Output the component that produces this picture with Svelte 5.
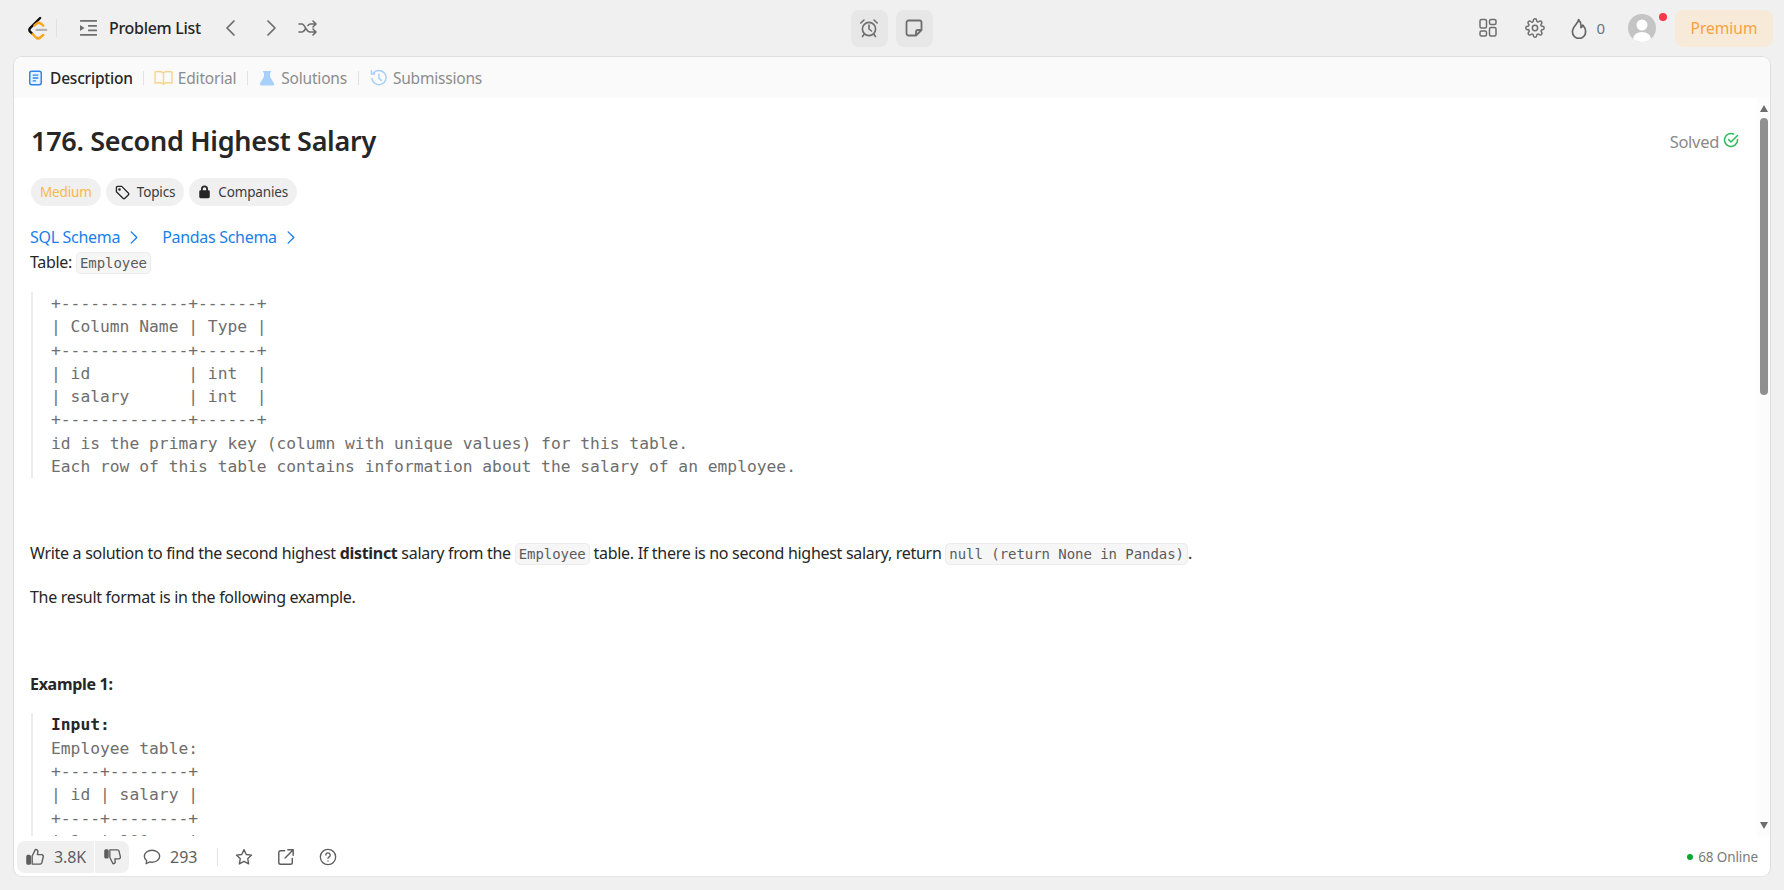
<script>
  const schema = `+-------------+------+
| Column Name | Type |
+-------------+------+
| id          | int  |
| salary      | int  |
+-------------+------+
id is the primary key (column with unique values) for this table.
Each row of this table contains information about the salary of an employee.`;
  const example = `Employee table:
+----+--------+
| id | salary |
+----+--------+
| 1  | 100    |
| 2  | 200    |`;
</script>

<div class="page">
  <header class="top">
    <div class="left">
      <svg class="logo" viewBox="0 0 24 28" width="21" height="25" fill="none" stroke-linecap="round" stroke-linejoin="round">
        <path d="M15 2 3.500 13.500a2.800 2.800 0 0 0 0 4L6 20" stroke="#111" stroke-width="2.800"/>
        <path d="M6.500 20.500 10 24a4 4 0 0 0 5.500 0l3-2.600" stroke="#f5a623" stroke-width="2.800"/>
        <path d="M8.500 10.500 11 8.500a4 4 0 0 1 5 0l2.500 2.200" stroke="#f5a623" stroke-width="2.800"/>
        <path d="M11 15.600h11" stroke="#b3b3b3" stroke-width="2.600"/>
      </svg>
      <span class="sep tall"></span>
      <svg class="ic list" viewBox="0 0 20 20" width="20" height="20" fill="#6e6e6e">
        <rect x="1" y="2" width="17" height="1.800" rx=".5"/><rect x="9" y="7" width="9" height="1.800" rx=".5"/><rect x="9" y="11.500" width="9" height="1.800" rx=".5"/><rect x="1" y="16" width="17" height="1.800" rx=".5"/><path d="M1 7v6l4.500-3z"/>
      </svg>
      <span class="plist">Problem List</span>
      <svg class="ic prev" viewBox="0 0 20 20" width="20" height="20" fill="none" stroke="#6b6b6b" stroke-width="1.700" stroke-linecap="round" stroke-linejoin="round"><path d="M13 3 6 10l7 7"/></svg>
      <svg class="ic next" viewBox="0 0 20 20" width="20" height="20" fill="none" stroke="#6b6b6b" stroke-width="1.700" stroke-linecap="round" stroke-linejoin="round"><path d="m7 3 7 7-7 7"/></svg>
      <svg class="ic shuffle" viewBox="0 0 20 20" width="20" height="20" fill="none" stroke="#6b6b6b" stroke-width="1.600" stroke-linecap="round" stroke-linejoin="round"><path d="M1 6h3c3 0 4 8 8 8h6M1 14h3c1.500 0 2.500-1.500 3.300-3M10 7.500C10.700 6.600 11.500 6 12.500 6H18M15 3l3 3-3 3M15 11l3 3-3 3"/></svg>
    </div>
    <div class="mid">
      <button class="sq" aria-label="Timer">
        <svg viewBox="0 0 20 20" width="20" height="20" fill="none" stroke="#6e6e6e" stroke-width="1.600" stroke-linecap="round" stroke-linejoin="round"><circle cx="10" cy="11" r="6.600"/><path d="M10 7v4l2.500 2M1.800 5 5 2M18.200 5 15 2M5 16.500 3.500 18.500M15 16.500l1.500 2"/></svg>
      </button>
      <button class="sq" aria-label="Notes">
        <svg viewBox="0 0 20 20" width="20" height="20" fill="none" stroke="#6e6e6e" stroke-width="1.800" stroke-linecap="round" stroke-linejoin="round"><path d="M4.500 2.500h11a2 2 0 0 1 2 2V12l-5.500 5.500H4.500a2 2 0 0 1-2-2v-11a2 2 0 0 1 2-2zM17.500 12H14a2 2 0 0 0-2 2v3.500"/></svg>
      </button>
    </div>
    <div class="right">
      <svg class="ic" viewBox="0 0 18 20" width="18" height="20" fill="none" stroke="#6e6e6e" stroke-width="1.500"><rect x="1" y="1.500" width="6.500" height="8.500" rx="1.500"/><rect x="1" y="13" width="6.500" height="5" rx="1.500"/><rect x="10.500" y="1.500" width="6.500" height="5" rx="1.500"/><rect x="10.500" y="9.500" width="6.500" height="8.500" rx="1.500"/></svg>
      <svg class="ic gear" viewBox="0 0 24 24" width="20" height="20" fill="none" stroke="#6e6e6e" stroke-width="1.800" stroke-linecap="round" stroke-linejoin="round"><circle cx="12" cy="12" r="3.200"/><path d="M19.400 15a1.650 1.650 0 0 0 .33 1.820l.06.06a2 2 0 1 1-2.830 2.830l-.06-.06a1.650 1.650 0 0 0-2.800 1.170V21a2 2 0 1 1-4 0v-.09a1.650 1.650 0 0 0-2.800-1.170l-.06.06a2 2 0 1 1-2.830-2.830l.06-.06A1.650 1.650 0 0 0 3.090 14H3a2 2 0 1 1 0-4h.09a1.650 1.650 0 0 0 1.170-2.800l-.06-.06a2 2 0 1 1 2.830-2.830l.06.06A1.650 1.650 0 0 0 10 3.090V3a2 2 0 1 1 4 0v.09a1.650 1.650 0 0 0 2.800 1.170l.06-.06a2 2 0 1 1 2.830 2.830l-.06.06A1.650 1.650 0 0 0 20.910 10H21a2 2 0 1 1 0 4h-.09a1.650 1.650 0 0 0-1.510 1z"/></svg>
      <span class="streak">
        <svg viewBox="0 0 18 22" width="17" height="21" fill="none" stroke="#666" stroke-width="1.800" stroke-linejoin="round"><path d="M8 1.500c.5 3.500-6.500 7-6.500 13a7 7 0 0 0 14 0c0-3-1.500-5.500-3-7-.2 1.500-1 2.300-2 2.500.5-3-.5-6.500-2.500-8.500z"/></svg>
        <span>0</span>
      </span>
      <span class="avatar">
        <svg viewBox="0 0 28 28" width="28" height="28"><defs><clipPath id="av"><circle cx="14" cy="14" r="14"/></clipPath></defs><g clip-path="url(#av)"><rect width="28" height="28" fill="#c4c4c4"/><circle cx="14" cy="11" r="5.500" fill="#fff"/><ellipse cx="14" cy="25" rx="9" ry="7" fill="#fff"/></g></svg>
        <i class="dot"></i>
      </span>
      <button class="premium">Premium</button>
    </div>
  </header>

  <main class="panel">
    <nav class="tabs">
      <span class="tab active">
        <svg viewBox="0 0 14 16" width="13" height="16"><rect x=".8" y=".8" width="12.400" height="14.400" rx="2" fill="#e9f2fe" stroke="#2c86ee" stroke-width="1.600"/><path d="M4 5h6M4 8h6M4 11h3.500" stroke="#2c86ee" stroke-width="1.400"/></svg>
        Description
      </span>
      <span class="sep"></span>
      <span class="tab">
        <svg class="book" viewBox="0 0 20 16" width="19" height="15" fill="none" stroke="#f7d48f" stroke-width="1.500"><path d="M10 3C8 1.500 4 1.500 1 2v12c3-.5 7-.5 9 1 2-1.500 6-1.500 9-1V2c-3-.5-7-.5-9 1zM10 3v12"/></svg>
        Editorial
      </span>
      <span class="sep"></span>
      <span class="tab">
        <svg viewBox="0 0 16 16" width="16" height="16"><path d="M4 1h8v1.500h-1v4l4 7a1.300 1.300 0 0 1-1.200 2H2.200A1.300 1.300 0 0 1 1 13.500l4-7v-4H4z" fill="#a9d0fb"/></svg>
        Solutions
      </span>
      <span class="sep"></span>
      <span class="tab">
        <svg viewBox="0 0 18 18" width="17" height="17" fill="none" stroke="#a9d0fb" stroke-width="1.600" stroke-linecap="round" stroke-linejoin="round"><path d="M3.500 4.500A7.500 7.500 0 1 1 2 10M1.500 1.800v3.400h3.400M9.500 5.500V10l2.500 2"/></svg>
        Submissions
      </span>
    </nav>

    <div class="body">
      <article class="content">
        <div class="titlerow">
          <h1>176. Second Highest Salary</h1>
          <span class="solved">Solved
            <svg viewBox="0 0 16 16" width="16" height="16" fill="none" stroke="#2cbb5d" stroke-width="1.500" stroke-linecap="round" stroke-linejoin="round"><path d="M14.500 7.500V8A6.500 6.500 0 1 1 10.600 2M5.500 7.500 8 10l6.500-6.500"/></svg>
          </span>
        </div>
        <div class="pills">
          <span class="pill medium">Medium</span>
          <span class="pill">
            <svg viewBox="0 0 16 16" width="15" height="15" fill="none" stroke="#262626" stroke-width="1.400" stroke-linejoin="round"><path d="M1.500 2.800c0-.7.600-1.300 1.300-1.300h4.400l7 7a1.500 1.500 0 0 1 0 2.100l-3.600 3.600a1.500 1.500 0 0 1-2.100 0l-7-7z"/><circle cx="4.800" cy="4.800" r=".7"/></svg>
            Topics
          </span>
          <span class="pill">
            <svg viewBox="0 0 14 16" width="13" height="14" fill="#262626"><path d="M3 6V4.500a4 4 0 0 1 8 0V6h.5A1.500 1.500 0 0 1 13 7.500v6a1.500 1.500 0 0 1-1.500 1.500h-9A1.500 1.500 0 0 1 1 13.500v-6A1.500 1.500 0 0 1 2.500 6zm2 0h4V4.500a2 2 0 0 0-4 0z"/></svg>
            Companies
          </span>
        </div>
        <div class="links">
          <a href="#s">SQL Schema <svg viewBox="0 0 10 16" width="10" height="15" fill="none" stroke="#1a7fe8" stroke-width="1.500" stroke-linecap="round" stroke-linejoin="round"><path d="m2 2 6 6-6 6"/></svg></a>
          <a href="#p">Pandas Schema <svg viewBox="0 0 10 16" width="10" height="15" fill="none" stroke="#1a7fe8" stroke-width="1.500" stroke-linecap="round" stroke-linejoin="round"><path d="m2 2 6 6-6 6"/></svg></a>
        </div>
        <p class="tbl">Table: <code>Employee</code></p>
        <pre class="first">{schema}</pre>
        <p class="intro">Write a solution to find the second highest <strong>distinct</strong> salary from the <code>Employee</code> table. If there is no second highest salary, return <code>null (return None in Pandas)</code>.</p>
        <p class="fmt">The result format is in the following example.</p>
        <p class="ex"><strong>Example 1:</strong></p>
        <pre><strong>Input:</strong>
{example}</pre>
      </article>
      <div class="scrollbar">
        <i class="up"></i>
        <i class="thumb"></i>
        <i class="grow"></i>
        <i class="down"></i>
      </div>
    </div>

    <footer class="foot">
      <div class="votes">
        <span class="like">
          <svg viewBox="0 0 20 20" width="19" height="19" fill="none" stroke="#5e5e5e" stroke-width="1.500" stroke-linejoin="round"><rect x="1" y="9" width="3.500" height="9" rx="1" fill="#5e5e5e"/><path d="M6.500 9.500 10 2.500c1.800 0 2.500 1.200 2.500 2.500L12 8h4.500c1 0 2 1 1.700 2.200l-1.500 6.300c-.2.900-1 1.500-1.900 1.500H6.500z"/></svg>
          3.8K
        </span>
        <span class="dislike">
          <svg viewBox="0 0 20 20" width="18" height="18" fill="none" stroke="#5e5e5e" stroke-width="1.500" stroke-linejoin="round"><rect x="1" y="2" width="3.500" height="9" rx="1" fill="#5e5e5e"/><path d="M6.500 10.500 10 17.500c1.800 0 2.500-1.200 2.500-2.500L12 12h4.500c1 0 2-1 1.700-2.200l-1.500-6.300C16.500 2.600 15.700 2 14.800 2H6.500z"/></svg>
        </span>
      </div>
      <span class="comments">
        <svg viewBox="0 0 20 20" width="18" height="18" fill="none" stroke="#5e5e5e" stroke-width="1.500" stroke-linejoin="round"><path d="M10 2.500c4.700 0 8.500 2.900 8.500 6.700s-3.800 6.600-8.500 6.600c-1 0-1.700-.1-2.500-.3L3.500 17.500l.6-3.400C2.500 13 1.500 11.200 1.500 9.200c0-3.800 3.800-6.700 8.500-6.700z"/></svg>
        293
      </span>
      <span class="sep fsep"></span>
      <svg class="fic" viewBox="0 0 20 20" width="18" height="18" fill="none" stroke="#5e5e5e" stroke-width="1.500" stroke-linejoin="round"><path d="m10 1.800 2.500 5.400 5.900.7-4.300 4 1.100 5.800L10 14.800l-5.200 2.900 1.100-5.800-4.300-4 5.900-.7z"/></svg>
      <svg class="fic" viewBox="0 0 20 20" width="18" height="18" fill="none" stroke="#5e5e5e" stroke-width="1.600" stroke-linecap="round" stroke-linejoin="round"><path d="M8.500 3H4a2 2 0 0 0-2 2v11a2 2 0 0 0 2 2h11a2 2 0 0 0 2-2v-4.500M12 2h6v6M18 2 9 11"/></svg>
      <svg class="fic" viewBox="0 0 20 20" width="18" height="18" fill="none" stroke="#5e5e5e" stroke-width="1.500" stroke-linecap="round" stroke-linejoin="round"><circle cx="10" cy="10" r="8.500"/><path d="M7.600 7.800a2.400 2.400 0 1 1 3.700 2c-.8.500-1.300 1-1.300 1.700M10 14.300v.1"/></svg>
      <span class="online"><i></i>68 Online</span>
    </footer>
  </main>
</div>

<style>
  :global(body) { margin: 0; background: #f0f0f0; }
  .page {
    width: 1784px; height: 890px; overflow: hidden; display: flex; flex-direction: column;
    font-family: "Noto Sans", "Open Sans", sans-serif; color: #262626; background: #f0f0f0;
  }
  svg { flex: none; display: block; }
  .top { height: 56px; display: flex; align-items: center; position: relative; padding: 0 11px; }
  .left { display: flex; align-items: center; flex: 1; }
  .logo { margin: 0 8px 0 16px; }
  .sep { width: 1px; height: 15px; background: #e2e2e2; flex: none; }
  .sep.tall { height: 18px; margin-right: 22px; }
  .plist { font-size: 16px; font-weight: 500; margin-left: 10px; letter-spacing: -0.3px; }
  .prev { margin-left: 20px; }
  .next { margin-left: 20px; }
  .shuffle { margin-left: 17px; }
  .mid { display: flex; gap: 8px; justify-content: center; flex: 1; }
  .sq { width: 37px; height: 37px; border: 0; border-radius: 8px; background: #e7e7e7; display: flex; align-items: center; justify-content: center; padding: 0; }
  .right { display: flex; align-items: center; flex: 1; justify-content: flex-end; }
  .gear { margin-left: 28px; }
  .streak { display: flex; align-items: center; gap: 8px; margin-left: 26px; font-size: 15px; color: #6a7480; }
  .avatar { position: relative; margin-left: 23px; display: block; width: 28px; height: 28px; }
  .dot { position: absolute; right: -11px; top: -1px; width: 8px; height: 8px; border-radius: 50%; background: #f5394c; }
  .premium { margin-left: 19px; width: 98px; height: 37px; border: 0; border-radius: 8px; background: #f8ead8; color: #f9a13d; font: 15.500px "Noto Sans", sans-serif; padding: 0; }

  .panel {
    margin: 0 13px; height: 821px; background: #fff; border: 1px solid #dedede; border-bottom-color: #e4e4e4;
    border-radius: 9px; display: flex; flex-direction: column; overflow: hidden; box-sizing: border-box;
  }
  .tabs { height: 41px; flex: none; background: #fafafa; display: flex; align-items: center; padding-left: 15px; gap: 11px; font-size: 15.500px; letter-spacing: -0.2px; color: #8c8c8c; }
  .tab { display: flex; align-items: center; gap: 6px; }
  .tab.active { color: #262626; font-weight: 500; gap: 8px; margin-right: -1px; }
  .book { margin: 0 -1px 0 -1px; }
  .tabs .sep { height: 14px; }

  .body { flex: 1; display: flex; min-height: 0; }
  .content { flex: 1; min-width: 0; overflow: hidden; padding: 0 17px 0 16px; font-size: 16px; letter-spacing: -0.3px; line-height: 23px; }
  .titlerow { display: flex; align-items: center; justify-content: space-between; height: 32px; margin-top: 27px; padding-left: 1px; }
  h1 { margin: 0; font-size: 27px; font-weight: 600; letter-spacing: -0.3px; line-height: 32px; }
  .solved { display: flex; align-items: center; gap: 4px; color: #8a8a8a; font-size: 16.500px; margin-right: 1px; }
  .solved svg { margin-top: -2px; }
  .pills { display: flex; gap: 5px; margin: 21px 0 0 1px; }
  .pill { height: 28px; border-radius: 14px; background: #f0f0f0; padding: 0 9px; display: flex; align-items: center; gap: 7px; font-size: 13.500px; letter-spacing: -0.15px; color: #3c3c3c; }
  .pill.medium { color: #f9b84a; }
  .links { display: flex; gap: 23px; margin-top: 20px; }
  .links a { color: #1a7fe8; text-decoration: none; display: flex; align-items: center; gap: 9px; }
  .tbl { margin: 2px 0 0; }
  code {
    font-family: "DejaVu Sans Mono", monospace; font-size: 14px; letter-spacing: -0.05px; color: #5c5c5c; background: #f6f6f6;
    border: 1px solid #ececec; border-radius: 5px; padding: 2px 3px;
  }
  pre {
    font-family: "DejaVu Sans Mono", monospace; font-size: 16.300px; line-height: 23.300px; letter-spacing: 0; color: #6e6e6e;
    margin: 17px 0 0 1px; padding-left: 18px; border-left: 2px solid #ececec; white-space: pre;
  }
  pre strong { color: #262626; font-weight: 700; }
  .intro { margin: 64px 0 0; }
  .fmt { margin: 20px 0 0; }
  .ex { margin: 64px 0 0; }
  .ex + pre { margin-top: 17px; }

  .scrollbar { width: 13px; flex: none; display: flex; flex-direction: column; align-items: center; background: #fcfcfc; }
  .up, .down { width: 0; height: 0; border-left: 4.500px solid transparent; border-right: 4.500px solid transparent; flex: none; }
  .up { border-bottom: 7px solid #6e6e6e; margin-top: 7px; }
  .down { border-top: 7px solid #6e6e6e; margin-bottom: 7px; }
  .thumb { width: 8px; height: 277px; border-radius: 4px; background: #8f8f8f; margin-top: 6px; flex: none; }
  .grow { flex: 1; }

  .foot { height: 40px; flex: none; box-sizing: border-box; padding: 1px 12px 0 3px; display: flex; align-items: center; color: #5e5e5e; font-size: 16px; letter-spacing: -0.1px; }
  .votes { display: flex; height: 32px; border-radius: 8px; background: #f0f0f0; overflow: hidden; }
  .like, .dislike { display: flex; align-items: center; gap: 9px; padding: 0 9px; }
  .like { border-right: 1px solid #fff; padding-right: 8px; }
  .dislike { padding-right: 7px; }
  .comments { display: flex; align-items: center; gap: 9px; margin-left: 14px; }
  .fsep { height: 18px; margin: 0 17px 0 20px; }
  .fic { margin-right: 24px; }
  .online { margin-left: auto; display: flex; align-items: center; gap: 5px; font-size: 13.500px; color: #7a7a7a; }
  .online i { width: 6px; height: 6px; border-radius: 50%; background: #0aa82c; }
</style>
